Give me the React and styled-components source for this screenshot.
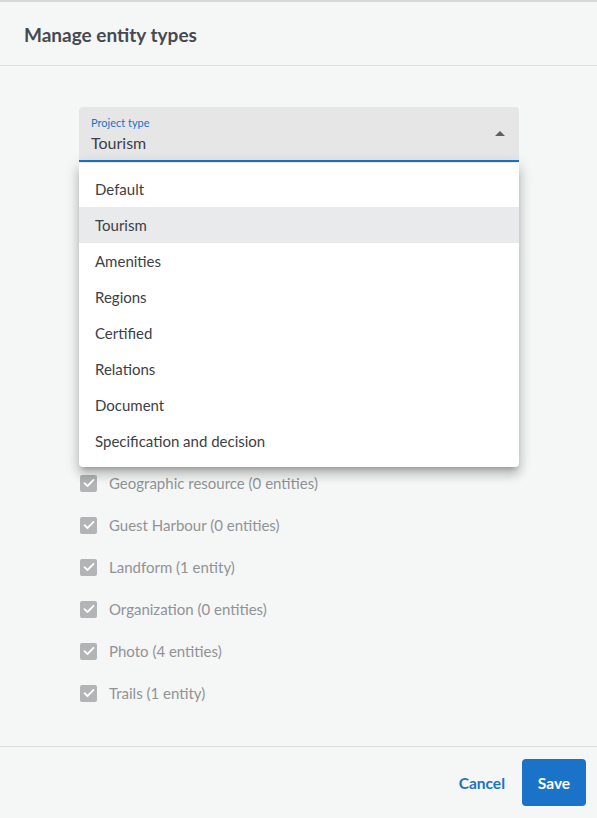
import styled, { createGlobalStyle } from "styled-components"

const options = ["Default", "Tourism", "Amenities", "Regions", "Certified", "Relations", "Document", "Specification and decision"]

const types = [
    "Geographic resource (0 entities)",
    "Guest Harbour (0 entities)",
    "Landform (1 entity)",
    "Organization (0 entities)",
    "Photo (4 entities)",
    "Trails (1 entity)"
]

const GlobalStyle = createGlobalStyle`
    html, body {
        margin: 0;
        padding: 0;
        background: #f5f6f6;
        font-family: Lato, "Open Sans", sans-serif;
    }
    * { box-sizing: border-box; }
`

export default function App() {
    return (
        <>
            <GlobalStyle />
            <Dialog>
                <Header>
                    <h2>Manage entity types</h2>
                </Header>
                <Body>
                    <SelectWrap>
                        <Select>
                            <div>
                                <Label>Project type</Label>
                                <Value>Tourism</Value>
                            </div>
                            <Arrow />
                        </Select>
                        <Menu>
                            {options.map(o => (
                                <Option key={o} active={o === "Tourism"}>{o}</Option>
                            ))}
                        </Menu>
                    </SelectWrap>
                    <List>
                        {types.map(t => (
                            <Row key={t}>
                                <Check>
                                    <svg width="12" height="10" viewBox="0 0 12 10">
                                        <path d="M1.5 5.2 L4.5 8 L10.5 1.8" fill="none" stroke="#fff" strokeWidth="1.8" strokeLinecap="round" strokeLinejoin="round" />
                                    </svg>
                                </Check>
                                <span>{t}</span>
                            </Row>
                        ))}
                    </List>
                </Body>
                <Footer>
                    <TextButton>Cancel</TextButton>
                    <SaveButton>Save</SaveButton>
                </Footer>
            </Dialog>
        </>
    )
}

const Dialog = styled.div`
    width: 597px;
    height: 818px;
    display: flex;
    flex-direction: column;
    border-top: 2px solid #d6d7d9;
    background: #f5f6f6;
`

const Header = styled.div`
    height: 64px;
    display: flex;
    align-items: center;
    padding: 0 24px;
    border-bottom: 1px solid #dcdddf;

    h2 {
        margin: 0;
        font-size: 19px;
        font-weight: 700;
        color: #464a50;
        padding-top: 2px;
    }
`

const Body = styled.div`
    flex: 1;
    padding: 41px 0 0 79px;
`

const SelectWrap = styled.div`
    position: relative;
    width: 440px;
`

const Select = styled.div`
    height: 55px;
    background: #e6e6e6;
    border-radius: 4px 4px 0 0;
    border-bottom: 2px solid #1a73c8;
    display: flex;
    align-items: flex-start;
    justify-content: space-between;
    padding: 9px 14px 0 12px;
`

const Label = styled.div`
    font-size: 11px;
    color: #1a73c8;
    line-height: 14px;
`

const Value = styled.div`
    font-size: 16px;
    color: #3d4046;
    line-height: 20px;
    margin-top: 3px;
`

const Arrow = styled.div`
    width: 0;
    height: 0;
    border-left: 5px solid transparent;
    border-right: 5px solid transparent;
    border-bottom: 5px solid #5c5f63;
    margin-top: 15px;
`

const Menu = styled.div`
    position: absolute;
    top: 56px;
    left: 0;
    right: 0;
    z-index: 2;
    background: #fff;
    padding: 8px 0;
    border-radius: 0 0 4px 4px;
    box-shadow: 0 5px 5px -3px rgba(0,0,0,0.2), 0 8px 10px 1px rgba(0,0,0,0.14), 0 3px 14px 2px rgba(0,0,0,0.12);
`

const Option = styled.div`
    height: 36px;
    display: flex;
    align-items: center;
    padding: 0 16px;
    font-size: 15px;
    color: #3d4046;
    background: ${p => p.active ? "#e8eaeb" : "transparent"};
`

const List = styled.div`
    display: flex;
    flex-direction: column;
    gap: 24px;
    padding-top: 312px;
    padding-left: 1px;
`

const Row = styled.div`
    display: flex;
    align-items: center;
    height: 18px;
    gap: 12px;
    font-size: 15px;
    color: #909396;
`

const Check = styled.div`
    width: 17px;
    height: 17px;
    border-radius: 2px;
    background: #b3b4b5;
    display: flex;
    align-items: center;
    justify-content: center;
`

const Footer = styled.div`
    height: 72px;
    border-top: 1px solid #dcdddf;
    display: flex;
    align-items: center;
    justify-content: flex-end;
    gap: 17px;
    padding: 0 11px 0 0;
`

const TextButton = styled.button`
    background: none;
    border: none;
    font-family: inherit;
    font-size: 15.5px;
    font-weight: 700;
    color: #1a73c8;
    padding: 0;
    cursor: pointer;
`

const SaveButton = styled.button`
    width: 64px;
    height: 47px;
    background: #1a73c8;
    color: #fff;
    border: none;
    border-radius: 4px;
    font-family: inherit;
    font-size: 15.5px;
    font-weight: 700;
    cursor: pointer;
`
